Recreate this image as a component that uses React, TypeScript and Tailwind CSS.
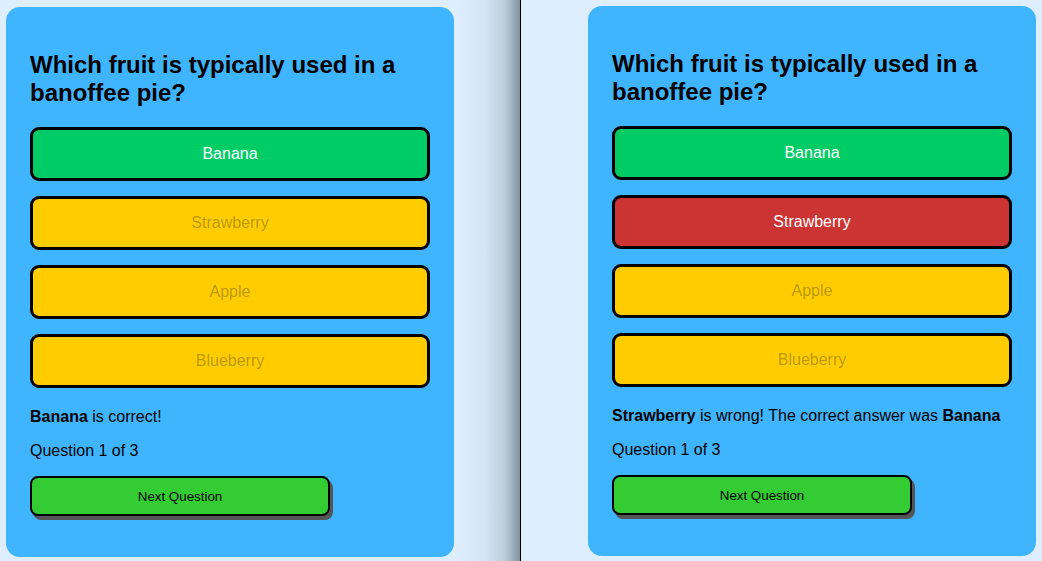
import React from "react";

type Opt = { label: string; kind: "correct" | "wrong" | "idle" };

function Card({ options, feedback, className }: { options: Opt[]; feedback: React.ReactNode; className?: string }) {
  return (
    <div className={`w-[448px] h-[550px] rounded-[14px] bg-[#3fb5ff] px-6 pt-6 ${className ?? ""}`}>
      <h2 className="mt-5 mb-5 text-[24px] leading-[28px] font-bold text-black">
        Which fruit is typically used in a banoffee pie?
      </h2>
      <div className="flex flex-col gap-[15px]">
        {options.map((o) => (
          <button
            key={o.label}
            disabled
            className={`h-[54px] w-[400px] rounded-[9px] border-[3px] border-black text-[16px] ${
              o.kind === "correct"
                ? "bg-[#00cc66] text-white"
                : o.kind === "wrong"
                ? "bg-[#cc3333] text-white"
                : "bg-[#ffcc00] text-[rgba(16,16,16,0.3)]"
            }`}
          >
            {o.label}
          </button>
        ))}
      </div>
      <p className="mt-[20px] text-[16px] leading-[18px] text-black">{feedback}</p>
      <p className="mt-[16px] text-[16px] leading-[18px] text-black">Question 1 of 3</p>
      <button className="mt-[16px] h-[40px] w-[300px] rounded-[8px] border-2 border-black bg-[#33cc33] pt-px text-[13.33px] text-black shadow-[3px_4px_0_#555]">
        Next Question
      </button>
    </div>
  );
}

export default function App() {
  return (
    <div
      className="flex h-[561px] w-[1042px] overflow-hidden bg-[#deeeff] text-black"
      style={{ fontFamily: '"Liberation Sans", Arial, Helvetica, sans-serif' }}
    >
      <div className="h-full w-[520px] shrink-0 pl-[6px] pt-[7px] bg-[linear-gradient(to_right,#deeeff_0px,#deeeff_455px,#d6e5f5_485px,#bccbd9_505px,#9aa8b8_514px,#8593a3_519px)]">
        <Card
          options={[
            { label: "Banana", kind: "correct" },
            { label: "Strawberry", kind: "idle" },
            { label: "Apple", kind: "idle" },
            { label: "Blueberry", kind: "idle" },
          ]}
          feedback={
            <>
              <b>Banana</b> is correct!
            </>
          }
        />
      </div>
      <div className="h-full w-px shrink-0 bg-black" />
      <div className="h-full flex-1 pl-[67px] pt-[6px]">
        <Card
          options={[
            { label: "Banana", kind: "correct" },
            { label: "Strawberry", kind: "wrong" },
            { label: "Apple", kind: "idle" },
            { label: "Blueberry", kind: "idle" },
          ]}
          feedback={
            <>
              <b>Strawberry</b> is wrong! The correct answer was <b>Banana</b>
            </>
          }
        />
      </div>
    </div>
  );
}
